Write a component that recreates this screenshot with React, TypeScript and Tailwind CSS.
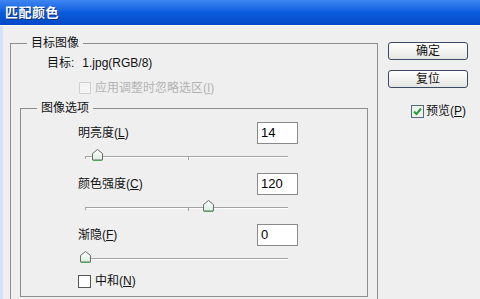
import React from 'react'

const FONT = '"Liberation Sans", "Noto Sans CJK SC", sans-serif'

function Thumb() {
  return (
    <svg width="11" height="12" viewBox="0 0 11 12" className="block">
      <defs>
        <linearGradient id="tg" x1="0" y1="0" x2="0" y2="1">
          <stop offset="0" stopColor="#ffffff" />
          <stop offset="1" stopColor="#d8efe0" />
        </linearGradient>
      </defs>
      <polygon points="5.5,0.5 10.5,4.5 10.5,11 0.5,11 0.5,4.5" fill="url(#tg)" stroke="#6b6b6b" />
      <line x1="1" y1="11.5" x2="10" y2="11.5" stroke="#4fa75a" />
    </svg>
  )
}

function Slider({ thumb, midTick = true }: { thumb: number; midTick?: boolean }) {
  return (
    <div className="relative ml-[59px] h-[12px] w-[212px]">
      <div className="absolute left-[5px] top-[7px] h-px w-[203px] bg-[#a3a3a3]" />
      <div className="absolute left-[5px] top-[8px] h-px w-[203px] bg-white" />
      <div className="absolute left-[5px] top-[7px] h-[3px] w-px bg-[#a3a3a3]" />
      {midTick && <div className="absolute left-[108px] top-[8px] h-[3px] w-px bg-[#a3a3a3]" />}
      <div className="absolute top-0" style={{ left: thumb }}>
        <Thumb />
      </div>
    </div>
  )
}

function ValueRow({ label, hot, rest, value }: { label: string; hot: string; rest: string; value: string }) {
  return (
    <div className="ml-[57px] flex h-[22px] w-[220px] items-center">
      <span className="flex-1 text-[12px] leading-[16px] text-[#111]">
        {label}(<span className="underline">{hot}</span>){rest}
      </span>
      <div className="flex h-[22px] w-[41px] items-center border border-[#8a8a8a] bg-white pl-[3px] text-[13px] text-black">
        {value}
      </div>
    </div>
  )
}

function Group({ title, className, children }: { title: string; className: string; children: React.ReactNode }) {
  return (
    <div className={`relative border border-[#8e8e8e] ${className}`}>
      <span className="absolute left-[16px] top-[-9px] bg-[#efeff0] px-[4px] text-[12px] leading-[16px] text-[#111]">
        {title}
      </span>
      {children}
    </div>
  )
}

export default function App() {
  return (
    <div className="flex h-[299px] w-[480px] flex-col overflow-hidden bg-[#efeff0]" style={{ fontFamily: FONT }}>
      {/* Title bar */}
      <div className="flex h-[25px] shrink-0 items-center bg-gradient-to-b from-[#3d86f2] via-[#0a5cdc] to-[#0449c6] pl-[5px]">
        <span className="text-[13px] font-bold tracking-[0.5px] text-white [text-shadow:1px_1px_0_#0b2f7a]">
          匹配颜色
        </span>
      </div>

      <div className="flex flex-1 border-t border-[#f8f8f8]">
        <div className="w-[3px] shrink-0 bg-[#d3e2f6]" />

        {/* Left: target group */}
        <Group title="目标图像" className="ml-[7px] mt-[17px] h-[300px] w-[368px] shrink-0">
          <div className="ml-[36px] mt-[11px] flex h-[16px] items-center text-[12px] text-[#111]">
            <span>目标:</span>
            <span className="ml-[8px]">1.jpg(RGB/8)</span>
          </div>
          <div className="ml-[68px] mt-[9px] flex h-[16px] items-center gap-[4px] text-[12px] text-[#b3b3b3]">
            <div className="h-[12px] w-[12px] border border-[#cfcfcf] bg-[#f4f4f4]" />
            <span>
              应用调整时忽略选区(<span className="underline">I</span>)
            </span>
          </div>

          <Group title="图像选项" className="ml-[9px] mt-[12px] h-[189px] w-[348px]">
            <div className="mt-[13px]">
              <ValueRow label="明亮度" hot="L" rest="" value="14" />
            </div>
            <div className="mt-[5px]">
              <Slider thumb={12} />
            </div>
            <div className="mt-[12px]">
              <ValueRow label="颜色强度" hot="C" rest="" value="120" />
            </div>
            <div className="mt-[5px]">
              <Slider thumb={123} />
            </div>
            <div className="mt-[12px]">
              <ValueRow label="渐隐" hot="F" rest="" value="0" />
            </div>
            <div className="mt-[5px]">
              <Slider thumb={0} midTick={false} />
            </div>
            <div className="ml-[57px] mt-[10px] flex h-[16px] items-center gap-[4px] text-[12px] text-[#111]">
              <div className="h-[13px] w-[13px] border border-[#555] bg-white" />
              <span>
                中和(<span className="underline">N</span>)
              </span>
            </div>
          </Group>
        </Group>

        {/* Right: buttons */}
        <div className="ml-[10px] mt-[16px] flex w-[80px] flex-col">
          <button className="flex h-[18px] items-center justify-center rounded-[3px] border border-[#3b4a66] bg-gradient-to-b from-white to-[#e6e6e2] text-[12px] text-[#111]">
            确定
          </button>
          <button className="mt-[10px] flex h-[18px] items-center justify-center rounded-[3px] border border-[#3b4a66] bg-gradient-to-b from-white to-[#e6e6e2] text-[12px] text-[#111]">
            复位
          </button>
          <div className="ml-[23px] mt-[16px] flex h-[14px] items-center gap-[2px] text-[12px] text-[#111]">
            <div className="flex h-[13px] w-[13px] items-center justify-center border border-[#4d6a7f] bg-[#eef3ee]">
              <svg width="9" height="9" viewBox="0 0 9 9">
                <path d="M1 4.5 L3.5 7 L8 1.5" fill="none" stroke="#2c9a37" strokeWidth="2" />
              </svg>
            </div>
            <span>
              预览(<span className="underline">P</span>)
            </span>
          </div>
        </div>
      </div>
    </div>
  )
}
